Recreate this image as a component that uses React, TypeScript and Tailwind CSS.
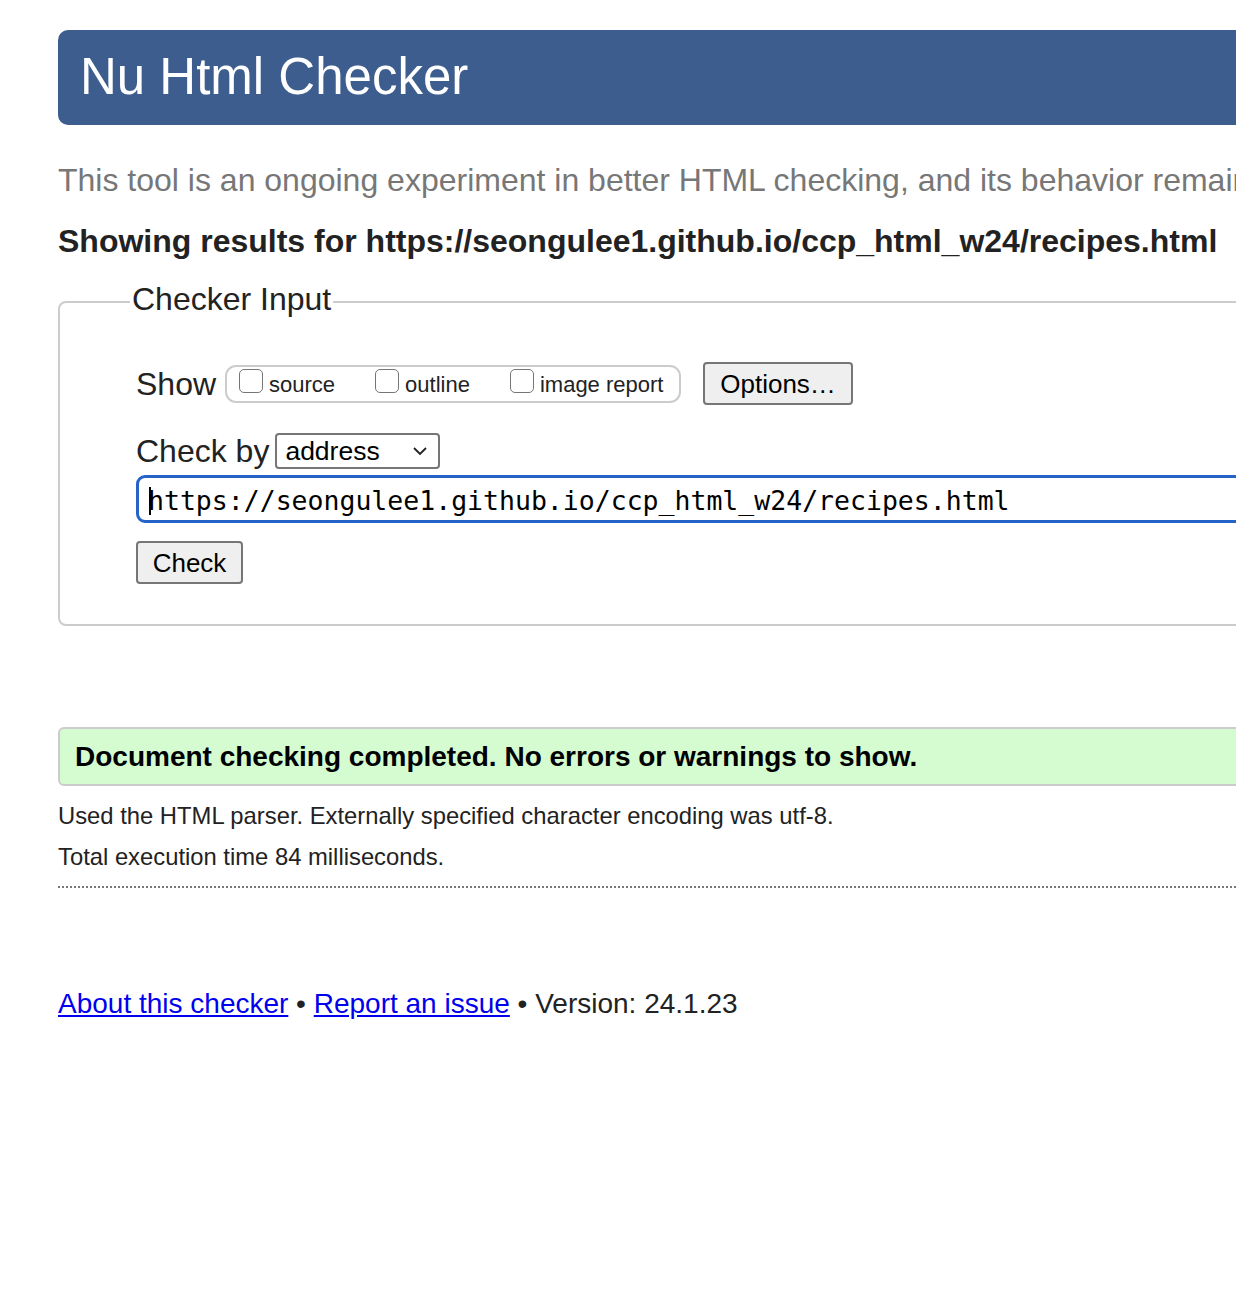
import React from "react";

const sans = { fontFamily: '"Liberation Sans", Arial, Helvetica, sans-serif' };
const mono = { fontFamily: '"DejaVu Sans Mono", Menlo, monospace' };

function Box({ label }: { label: string }) {
  return (
    <span className="flex items-center">
      <span className="inline-block w-[24px] h-[24px] rounded-[5px] border border-[#767676] bg-white -mt-[6px]" />
      <span className="ml-[6px] text-[22px] text-[#222] leading-none mt-[3px]">{label}</span>
    </span>
  );
}

export default function App() {
  return (
    <div className="w-[1236px] h-[1316px] overflow-hidden bg-white text-[#222]" style={sans}>
      <div className="w-[1500px] pl-[58px] pt-[30px]">
        <div className="h-[95px] bg-[#3d5d8f] rounded-l-[10px] flex items-center pl-[22px]">
          <h1 className="text-[51px] text-white leading-none -mt-[2px]">Nu Html Checker</h1>
        </div>
        <p className="mt-[37px] text-[32px] leading-[36px] text-[#777] whitespace-nowrap">
          This tool is an ongoing experiment in better HTML checking, and its behavior remains subject to change
        </p>
        <p className="mt-[25px] text-[32px] leading-[36px] font-bold text-[#222] whitespace-nowrap">
          Showing results for https://seongulee1.github.io/ccp_html_w24/recipes.html
        </p>
        <div className="relative mt-[42px] h-[325px] border-2 border-[#ccc] rounded-[8px] pl-[76px] pt-[59px]">
          <div className="absolute left-[70px] -top-[22px] bg-white px-[2px] text-[32px] leading-[36px] text-[#222]">
            Checker Input
          </div>
          <div className="flex items-center">
            <span className="text-[32px] leading-[36px] text-[#222]">Show</span>
            <div className="ml-[9px] w-[456px] h-[38px] border-2 border-[#ccc] rounded-[11px] flex items-center pl-[12px] gap-[40px]">
              <Box label="source" />
              <Box label="outline" />
              <Box label="image report" />
            </div>
            <button className="ml-[22px] w-[150px] h-[43px] bg-[#efefef] border-2 border-[#767676] rounded-[4px] text-[26px] text-black leading-none flex items-center justify-center">
              Options…
            </button>
          </div>
          <div className="mt-[28px] flex items-center">
            <span className="text-[32px] leading-[36px] text-[#222]">Check by</span>
            <div className="ml-[6px] w-[165px] h-[36px] border-2 border-[#767676] rounded-[4px] flex items-center justify-between pl-[8px] pr-[10px]">
              <span className="text-[26.5px] leading-none text-black">address</span>
              <svg width="16" height="10" viewBox="0 0 16 10">
                <path d="M2 2 L8 8 L14 2" fill="none" stroke="#222" strokeWidth="1.8" />
              </svg>
            </div>
          </div>
          <div className="mt-[6px] h-[48px] border-[3px] border-[#2563c9] rounded-[9px] flex items-center pl-[9px] relative">
            <span className="absolute left-[10px] top-[9px] w-[2px] h-[28px] bg-black" />
            <span className="text-[26.5px] leading-none text-black mt-[5px]" style={mono}>
              https://seongulee1.github.io/ccp_html_w24/recipes.html
            </span>
          </div>
          <button className="mt-[18px] w-[107px] h-[43px] bg-[#efefef] border-2 border-[#767676] rounded-[4px] text-[26px] text-black leading-none flex items-center justify-center">
            Check
          </button>
        </div>
        <div className="mt-[101px] h-[59px] bg-[#d5fbd0] border-2 border-[#ccc] rounded-[6px] flex items-center pl-[15px]">
          <span className="text-[28px] font-bold text-black leading-none">
            Document checking completed. No errors or warnings to show.
          </span>
        </div>
        <p className="mt-[17px] text-[23.8px] leading-[26px] text-[#222]">
          Used the HTML parser. Externally specified character encoding was utf-8.
        </p>
        <p className="mt-[15px] text-[23.8px] leading-[26px] text-[#222]">Total execution time 84 milliseconds.</p>
        <div className="mt-[16px] border-t-2 border-dotted border-[#777]" />
        <p className="mt-[100px] text-[28px] leading-[32px] text-[#222]">
          <a href="#" className="text-[#0000ee] underline">About this checker</a>
          {" • "}
          <a href="#" className="text-[#0000ee] underline">Report an issue</a>
          {" • Version: 24.1.23"}
        </p>
      </div>
    </div>
  );
}
